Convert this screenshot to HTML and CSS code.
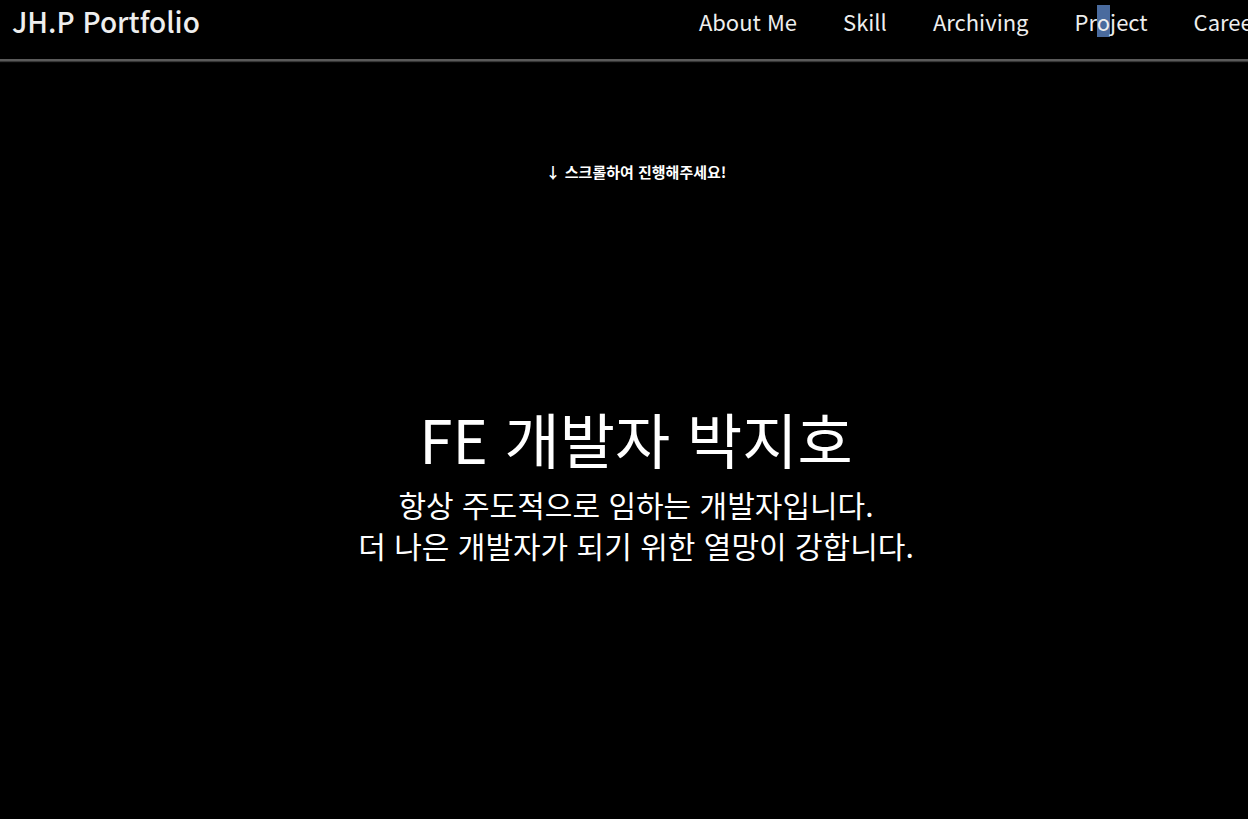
FILE: index.html
```html
<!DOCTYPE html>
<html lang="ko">
<head>
<meta charset="utf-8">
<title>JH.P Portfolio</title>
<link rel="stylesheet" href="styles.css">
</head>
<body>
<header class="header">
  <div class="logo">JH.P Portfolio</div>
  <nav class="nav">
    <a class="nav-item">About Me</a>
    <a class="nav-item">Skill</a>
    <a class="nav-item">Archiving</a>
    <a class="nav-item">Pr<span class="sel">o</span>ject</a>
    <a class="nav-item">Career</a>
  </nav>
</header>
<main class="hero">
  <p class="hint">↓ 스크롤하여 진행해주세요!</p>
  <h1 class="title">FE 개발자 박지호</h1>
  <p class="sub">항상 주도적으로 임하는 개발자입니다.<br>더 나은 개발자가 되기 위한 열망이 강합니다.</p>
</main>
</body>
</html>
```
FILE: styles.css
```css
html, body {
  margin: 0;
  padding: 0;
  background: #000;
  overflow: hidden;
}
body {
  width: 1248px;
  height: 819px;
  color: #fff;
  font-family: "Noto Sans CJK KR", "Noto Sans", sans-serif;
}
.header {
  box-sizing: border-box;
  display: flex;
  align-items: center;
  height: 61px;
  padding: 0 0 18px 12px;
  border-bottom: 2px solid #5a5a5a;
  box-shadow: 0 1px 1px rgba(90,90,90,0.6);
  white-space: nowrap;
}
.logo {
  font-size: 28px;
  font-weight: 500;
  color: #eee;
  flex-shrink: 0;
}
.nav {
  display: flex;
  gap: 46px;
  margin-left: 499px;
  flex-shrink: 0;
}
.nav-item {
  font-size: 22px;
  color: #eee;
}
.sel {
  background: #4a6b9e;
}
.hero {
  display: flex;
  flex-direction: column;
  align-items: center;
  padding-left: 24px;
}
.hint {
  margin: 100px 0 0;
  font-size: 15px;
  font-weight: 700;
}
.title {
  margin: 220px 0 0;
  font-size: 60px;
  font-weight: 400;
  line-height: 1.2;
}
.sub {
  margin: 10px 0 0;
  font-size: 30px;
  line-height: 41px;
  text-align: center;
}
```
